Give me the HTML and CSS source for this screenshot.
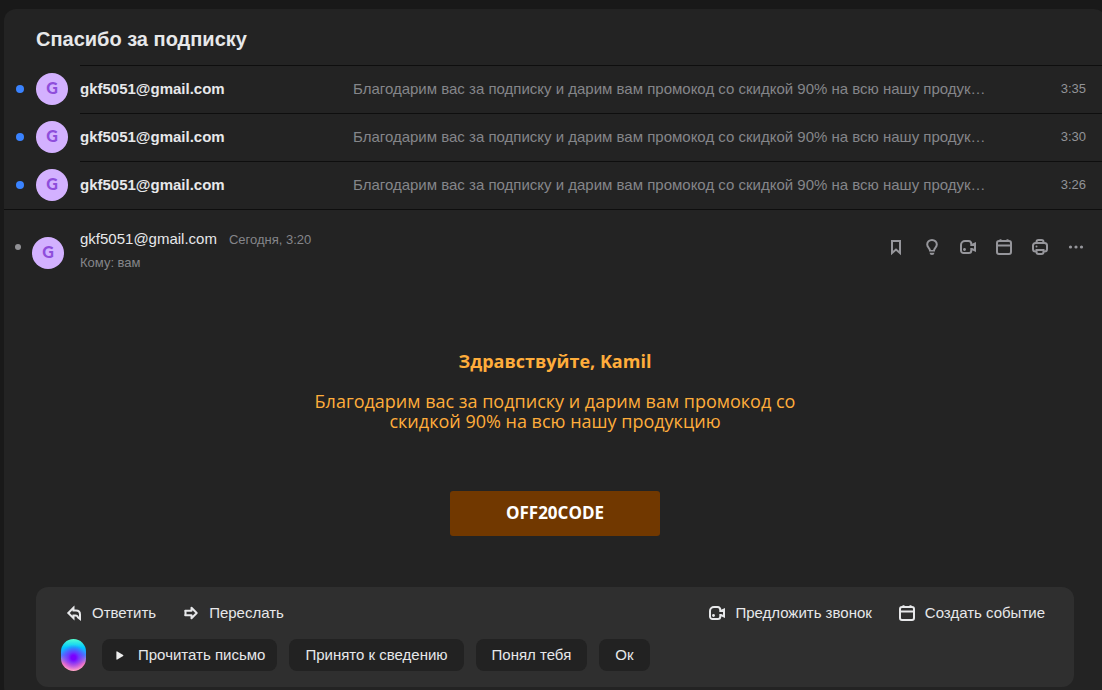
FILE: index.html
```html
<!DOCTYPE html>
<html lang="ru">
<head>
<meta charset="utf-8">
<title>Спасибо за подписку</title>
<link rel="stylesheet" href="styles.css">
</head>
<body>
<svg class="sprite" aria-hidden="true">
  <symbol id="video" viewBox="0 0 16 16"><path d="M11.300 6V5A3 3 0 0 0 8.500 2H5A4 4 0 0 0 1 6V11.500A2.500 2.500 0 0 0 3.500 14H8.800A2.500 2.500 0 0 0 11.300 11.500V10H12L15 11.500V4.500L12 6Z"/><circle class="dot" cx="4.500" cy="10.500" r="1.400"/></symbol>
  <symbol id="calendar" viewBox="0 0 16 16"><rect x="1" y="2" width="14" height="13" rx="2"/><path d="M1 6.500H15M4.500 .3V3M11.500 .3V3"/></symbol>
</svg>
<main class="thread">
  <h1 class="subject">Спасибо за подписку</h1>
  <section class="messages">
    <article class="message"><i class="unread"></i><span class="avatar">G</span><div class="summary"><b class="sender">gkf5051@gmail.com</b><span class="snippet">Благодарим вас за подписку и дарим вам промокод со скидкой 90% на всю нашу продук…</span><time class="time">3:35</time></div></article>
    <article class="message"><i class="unread"></i><span class="avatar">G</span><div class="summary"><b class="sender">gkf5051@gmail.com</b><span class="snippet">Благодарим вас за подписку и дарим вам промокод со скидкой 90% на всю нашу продук…</span><time class="time">3:30</time></div></article>
    <article class="message"><i class="unread"></i><span class="avatar">G</span><div class="summary"><b class="sender">gkf5051@gmail.com</b><span class="snippet">Благодарим вас за подписку и дарим вам промокод со скидкой 90% на всю нашу продук…</span><time class="time">3:26</time></div></article>
  </section>
  <article class="opened">
    <header class="head">
      <i class="read"></i><span class="avatar">G</span>
      <div class="meta"><div class="from">gkf5051@gmail.com<time class="date">Сегодня, 3:20</time></div><div class="to">Кому: вам</div></div>
      <div class="tools">
        <svg class="icon" viewBox="0 0 16 16"><path d="M4 2H12V14L8 10.500L4 14Z"/></svg>
        <svg class="icon" viewBox="0 0 16 16"><path d="M6 11.500C6 9 3.200 8.500 3.200 5.500A4.800 4.500 0 0 1 12.800 5.500C12.800 8.500 10 9 10 11.500"/><path class="dot" d="M5 11H11V12.500H5ZM5.500 13.700H10.500Q10.300 16 8 16Q5.700 16 5.500 13.700Z"/></svg>
        <svg class="icon"><use href="#video"/></svg>
        <svg class="icon"><use href="#calendar"/></svg>
        <svg class="icon" viewBox="0 0 16 16"><path d="M4.500 4V3A2 2 0 0 1 6.500 1H9.500A2 2 0 0 1 11.500 3V4M4.500 12.500H3.500A2.500 2.500 0 0 1 1 10V6.500A2.500 2.500 0 0 1 3.500 4H12.500A2.500 2.500 0 0 1 15 6.500V10A2.500 2.500 0 0 1 12.500 12.500H11.500M4.500 11H11.500V13A2 2 0 0 1 9.500 15H6.500A2 2 0 0 1 4.500 13Z"/><circle class="dot" cx="4.500" cy="7.500" r="1"/></svg>
        <svg class="icon" viewBox="0 0 16 16"><g class="dot"><circle cx="2.500" cy="8" r="1.600"/><circle cx="8" cy="8" r="1.600"/><circle cx="13.500" cy="8" r="1.600"/></g></svg>
      </div>
    </header>
    <div class="letter">
      <h2 class="greeting">Здравствуйте, Kamil</h2>
      <p class="copy">Благодарим вас за подписку и дарим вам промокод со скидкой 90% на всю нашу продукцию</p>
      <div class="code">OFF20CODE</div>
    </div>
    <footer class="reply">
      <div class="actions">
        <span class="action"><svg class="icon" viewBox="0 0 16 16"><path d="M7.500 2.800L2.300 8L7.500 13.200V10.500H9.500Q11.500 10.500 12 12.500L14 14V9.500Q14 5.500 10 5.500H7.500Z"/></svg>Ответить</span>
        <span class="action forward"><svg class="icon" viewBox="0 0 16 16"><path d="M8.500 2.800L13.700 8L8.500 13.200V10.300H2.200L2.600 8L2.200 5.700H8.500Z" stroke-linejoin="round"/></svg>Переслать</span>
        <span class="action call"><svg class="icon"><use href="#video"/></svg>Предложить звонок</span>
        <span class="action event"><svg class="icon"><use href="#calendar"/></svg>Создать событие</span>
      </div>
      <div class="suggestions">
        <i class="orb"></i>
        <span class="chip listen"><svg class="play" viewBox="0 0 8 10"><path d="M0 1Q0 0 1 .5L7.500 4.500Q8.200 5 7.500 5.500L1 9.500Q0 10 0 9Z"/></svg>Прочитать письмо</span>
        <span class="chip">Принято к сведению</span>
        <span class="chip">Понял тебя</span>
        <span class="chip">Ок</span>
      </div>
    </footer>
  </article>
</main>
</body>
</html>
```
FILE: styles.css
```css
* { box-sizing: border-box; }
body { margin: 0; height: 690px; overflow: hidden; padding: 9px 0 0 4px; background: #191919; color: #e7e8ea; font: 15px/20px "Liberation Sans", Arial, sans-serif; }
.sprite { display: none; }
.thread { width: 1102px; height: 690px; background: #232323; border-radius: 12px; }
.subject { margin: 0; height: 56px; padding: 18px 32px 0; font-size: 20px; line-height: 24px; }
.message { display: flex; height: 48px; align-items: center; padding-left: 12px; }
.unread { width: 8px; height: 8px; margin-right: 12px; border-radius: 50%; background: #3a83ff; }
.avatar { flex: none; width: 32px; height: 32px; border-radius: 50%; background: #d3b1ff; color: #8e4ddb; font: 900 16px/29px Lato, sans-serif; text-align: center; }
.summary { flex: 1; height: 48px; margin-left: 12px; padding: 0 20px 1px 0; border-top: 1px solid #0e0e0e; display: flex; align-items: center; }
.sender { width: 273px; }
.snippet { color: #85868a; white-space: nowrap; }
.time { margin-left: auto; color: #929397; font-size: 13px; }
.opened { border-top: 1px solid #0e0e0e; }
.head { display: flex; height: 80px; padding: 19px 22px 0 11px; }
.read { width: 6px; height: 6px; margin: 15px 11px 0 0; border-radius: 50%; background: #919195; }
.head .avatar { margin-top: 8px; }
.meta { margin-left: 16px; }
.from { display: flex; }
.date, .to { font-size: 13px; color: #85868a; }
.date { margin-left: 12px; padding-top: 1px; }
.to { margin-top: 4px; line-height: 18px; }
.tools { display: flex; gap: 20px; margin: 10px 0 0 auto; color: #96969b; }
.icon { flex: none; width: 16px; height: 16px; fill: none; stroke: currentColor; stroke-width: 2; overflow: visible; }
.dot { fill: currentColor; stroke: none; }
.letter { width: 500px; margin-left: 301px; padding-top: 61px; height: 297px; font: 18px/20px "Open Sans", sans-serif; color: #ffad3b; text-align: center; }
.greeting { margin: 0 0 20px; font-size: 18px; line-height: 20px; }
.copy { margin: 0; }
.code { width: 210px; height: 45px; margin: 60px auto 0; border-radius: 3px; background: #713800; color: #fff; font-size: 17px; font-weight: bold; line-height: 43px; }
.reply { width: 1038px; height: 100px; margin-left: 32px; padding: 10px 29px 0 25px; border-radius: 12px; background: #2f2f2f; }
.actions { display: flex; height: 32px; align-items: center; padding-left: 5px; }
.action { display: flex; align-items: center; gap: 10px; }
.forward { margin-left: 27px; }
.call { margin-left: auto; }
.event { margin-left: 27px; }
.suggestions { display: flex; gap: 12px; margin-top: 10px; }
.orb { width: 25px; height: 32px; margin-right: 4px; border-radius: 12.5px; background: radial-gradient(circle at 50% 58%, #7900ff 0 10%, #7325ffcc 24%, transparent 58%), linear-gradient(#53ffd0, #00c7ff 27%, #4384ff 50%, #ff7cc0 78%, #ffa5cb); }
.chip { height: 32px; padding: 0 16px; border-radius: 8px; background: #222; line-height: 32px; }
.listen { display: flex; align-items: center; gap: 14px; padding: 0 12px 0 14px; }
.play { width: 8px; height: 9px; fill: #eee; }
```
